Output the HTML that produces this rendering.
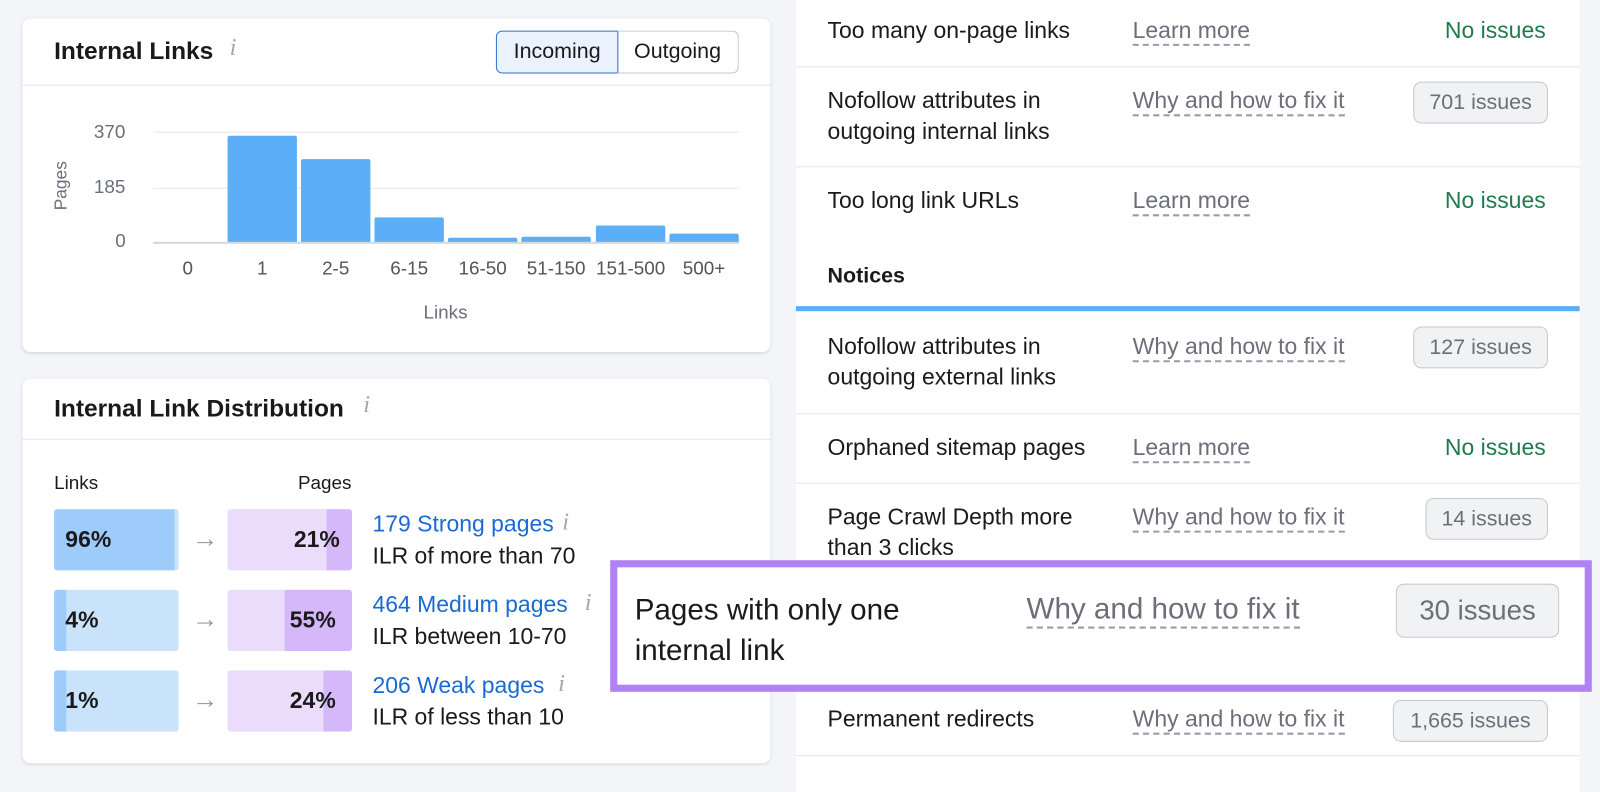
<!DOCTYPE html>
<html><head><meta charset="utf-8"><style>
*{box-sizing:border-box;margin:0;padding:0}
body{width:1600px;height:776px;background:#f4f5f9;font-family:"Liberation Sans",sans-serif;color:#1a1a1a;position:relative;overflow:hidden;font-size:22.5px}
#wrap{position:absolute;left:0;top:0;width:1568px;height:761px;transform:scale(1.0204);transform-origin:0 0}
.abs{position:absolute;white-space:nowrap}
.card{position:absolute;background:#fff;border-radius:8px;box-shadow:0 1px 3px rgba(0,0,0,.12)}
.title{font-weight:bold;font-size:24px}
.info{color:#a3a6b4;font-style:italic;font-family:"Liberation Serif",serif;font-size:24px}
.hline{position:absolute;height:1px;background:#e4e6ec}
.grey{color:#6c6e79}
.bar{position:absolute;background:#5aaff8;border-radius:2px 2px 0 0}
.xl{position:absolute;top:252px;width:80px;text-align:center;color:#555;font-size:18.5px}
.box{position:absolute;height:60px;border-radius:3px;overflow:hidden}
.link{color:#1a6bd1}
.dash{color:#6c6e79;border-bottom:2px dashed #9a9ca8;line-height:26px}
.green{color:#1f7a4d}
.badge{position:absolute;border:1px solid #c5c7d0;background:#f1f2f4;border-radius:8px;color:#6c6e79;text-align:center}
</style></head><body><div id="wrap">

<div class="card" style="left:22px;top:18px;width:733px;height:327px"></div>
<div class="abs title" style="left:53px;top:37px">Internal Links</div>
<div class="abs info" style="left:225px;top:34px">i</div>
<div class="abs" style="left:486px;top:30px;width:120px;height:42px;border:1px solid #2f6fce;background:#e9f2fe;border-radius:6px 0 0 6px;text-align:center;line-height:40px;font-size:21px">Incoming</div>
<div class="abs" style="left:605px;top:30px;width:119px;height:42px;border:1px solid #c5c7d0;border-left:none;border-radius:0 6px 6px 0;text-align:center;line-height:40px;font-size:21px">Outgoing</div>
<div class="hline" style="left:22px;width:733px;top:83px"></div>

<div class="abs grey" style="left:92px;top:118px;font-size:18.5px">370</div>
<div class="abs grey" style="left:92px;top:172px;font-size:18.5px">185</div>
<div class="abs grey" style="left:113px;top:225px;font-size:18.5px">0</div>
<div class="abs grey" style="left:36px;top:172px;font-size:17px;transform:rotate(-90deg)">Pages</div>
<div class="hline" style="left:150px;width:574px;top:129px"></div>
<div class="hline" style="left:150px;width:574px;top:184px"></div>
<div class="hline" style="left:150px;width:574px;top:237px;background:#d5d7dd;height:2px"></div>
<div class="bar" style="left:223px;width:68px;top:133px;height:104px"></div>
<div class="bar" style="left:295px;width:68px;top:156px;height:81px"></div>
<div class="bar" style="left:367px;width:68px;top:213px;height:24px"></div>
<div class="bar" style="left:439px;width:68px;top:233px;height:4px"></div>
<div class="bar" style="left:511px;width:68px;top:232px;height:5px"></div>
<div class="bar" style="left:584px;width:68px;top:221px;height:16px"></div>
<div class="bar" style="left:656px;width:68px;top:229px;height:8px"></div>
<div class="xl" style="left:144px">0</div>
<div class="xl" style="left:217px">1</div>
<div class="xl" style="left:289px">2-5</div>
<div class="xl" style="left:361px">6-15</div>
<div class="xl" style="left:433px">16-50</div>
<div class="xl" style="left:505px">51-150</div>
<div class="xl" style="left:578px">151-500</div>
<div class="xl" style="left:650px">500+</div>
<div class="abs grey" style="left:415px;top:295px;font-size:18.5px">Links</div>

<div class="card" style="left:22px;top:371px;width:733px;height:377px"></div>
<div class="abs title" style="left:53px;top:387px">Internal Link Distribution</div>
<div class="abs info" style="left:356px;top:384px">i</div>
<div class="hline" style="left:22px;width:733px;top:430px"></div>
<div class="abs" style="left:53px;top:462px;font-size:18.5px">Links</div>
<div class="abs" style="left:292px;top:462px;font-size:18.5px">Pages</div>

<div class="box" style="left:53px;top:499px;width:122px;background:#c9e3fb"><div style="position:absolute;left:0;top:0;bottom:0;width:118px;background:#9dcbfa"></div></div>
<div class="abs" style="left:64px;top:516px;font-weight:bold">96%</div>
<div class="box" style="left:53px;top:578px;width:122px;background:#c9e3fb"><div style="position:absolute;left:0;top:0;bottom:0;width:12px;background:#9dcbfa"></div></div>
<div class="abs" style="left:64px;top:595px;font-weight:bold">4%</div>
<div class="box" style="left:53px;top:657px;width:122px;background:#c9e3fb"><div style="position:absolute;left:0;top:0;bottom:0;width:12px;background:#9dcbfa"></div></div>
<div class="abs" style="left:64px;top:674px;font-weight:bold">1%</div>

<div class="abs" style="left:188px;top:512px;color:#9a9ca8;font-size:26px">→</div>
<div class="abs" style="left:188px;top:591px;color:#9a9ca8;font-size:26px">→</div>
<div class="abs" style="left:188px;top:670px;color:#9a9ca8;font-size:26px">→</div>

<div class="box" style="left:223px;top:499px;width:122px;background:#ebdcfc"><div style="position:absolute;right:0;top:0;bottom:0;width:25px;background:#d5b8f9"></div></div>
<div class="abs" style="left:288px;top:516px;font-weight:bold">21%</div>
<div class="box" style="left:223px;top:578px;width:122px;background:#ebdcfc"><div style="position:absolute;right:0;top:0;bottom:0;width:66px;background:#d5b8f9"></div></div>
<div class="abs" style="left:284px;top:595px;font-weight:bold">55%</div>
<div class="box" style="left:223px;top:657px;width:122px;background:#ebdcfc"><div style="position:absolute;right:0;top:0;bottom:0;width:28px;background:#d5b8f9"></div></div>
<div class="abs" style="left:284px;top:674px;font-weight:bold">24%</div>

<div class="abs link" style="left:365px;top:501px">179 Strong pages</div><div class="abs info" style="left:551px;top:499px">i</div>
<div class="abs" style="left:365px;top:532px">ILR of more than 70</div>
<div class="abs link" style="left:365px;top:580px">464 Medium pages</div><div class="abs info" style="left:573px;top:578px">i</div>
<div class="abs" style="left:365px;top:611px">ILR between 10-70</div>
<div class="abs link" style="left:365px;top:659px">206 Weak pages</div><div class="abs info" style="left:547px;top:657px">i</div>
<div class="abs" style="left:365px;top:690px">ILR of less than 10</div>

<div class="abs" style="left:780px;top:0;width:768px;height:776px;background:#fff"></div>
<div class="hline" style="left:780px;width:768px;top:65px"></div>
<div class="hline" style="left:780px;width:768px;top:163px"></div>
<div class="hline" style="left:780px;width:768px;top:405px"></div>
<div class="hline" style="left:780px;width:768px;top:473px"></div>
<div class="hline" style="left:780px;width:768px;top:740px"></div>
<div class="abs" style="left:780px;top:300px;width:768px;height:5px;background:#5aaff8"></div>

<div class="abs" style="left:811px;top:17px">Too many on-page links</div>
<div class="abs dash" style="left:1110px;top:17px">Learn more</div>
<div class="abs green" style="left:1416px;top:17px">No issues</div>

<div class="abs" style="left:811px;top:84px;line-height:30px">Nofollow attributes in<br>outgoing internal links</div>
<div class="abs dash" style="left:1110px;top:86px">Why and how to fix it</div>
<div class="badge" style="left:1385px;top:80px;width:132px;height:41px;line-height:39px;font-size:21px">701 issues</div>

<div class="abs" style="left:811px;top:184px">Too long link URLs</div>
<div class="abs dash" style="left:1110px;top:184px">Learn more</div>
<div class="abs green" style="left:1416px;top:184px">No issues</div>

<div class="abs" style="left:811px;top:259px;font-weight:bold;font-size:21px">Notices</div>

<div class="abs" style="left:811px;top:325px;line-height:30px">Nofollow attributes in<br>outgoing external links</div>
<div class="abs dash" style="left:1110px;top:327px">Why and how to fix it</div>
<div class="badge" style="left:1385px;top:320px;width:132px;height:41px;line-height:39px;font-size:21px">127 issues</div>

<div class="abs" style="left:811px;top:426px">Orphaned sitemap pages</div>
<div class="abs dash" style="left:1110px;top:426px">Learn more</div>
<div class="abs green" style="left:1416px;top:426px">No issues</div>

<div class="abs" style="left:811px;top:492px;line-height:30px">Page Crawl Depth more<br>than 3 clicks</div>
<div class="abs dash" style="left:1110px;top:494px">Why and how to fix it</div>
<div class="badge" style="left:1397px;top:488px;width:120px;height:41px;line-height:39px;font-size:21px">14 issues</div>

<div class="abs" style="left:811px;top:692px">Permanent redirects</div>
<div class="abs dash" style="left:1110px;top:692px">Why and how to fix it</div>
<div class="badge" style="left:1365px;top:686px;width:152px;height:41px;line-height:39px;font-size:21px">1,665 issues</div>

<div class="abs" style="left:598px;top:549px;width:962px;height:129px;border:7px solid #b182f5;background:#fff"></div>
<div class="abs" style="left:622px;top:578px;font-size:29px;line-height:40px">Pages with only one<br>internal link</div>
<div class="abs dash" style="left:1006px;top:581px;font-size:29px;line-height:33px">Why and how to fix it</div>
<div class="badge" style="left:1368px;top:572px;width:160px;height:53px;line-height:51px;font-size:27px">30 issues</div>
</div></body></html>
